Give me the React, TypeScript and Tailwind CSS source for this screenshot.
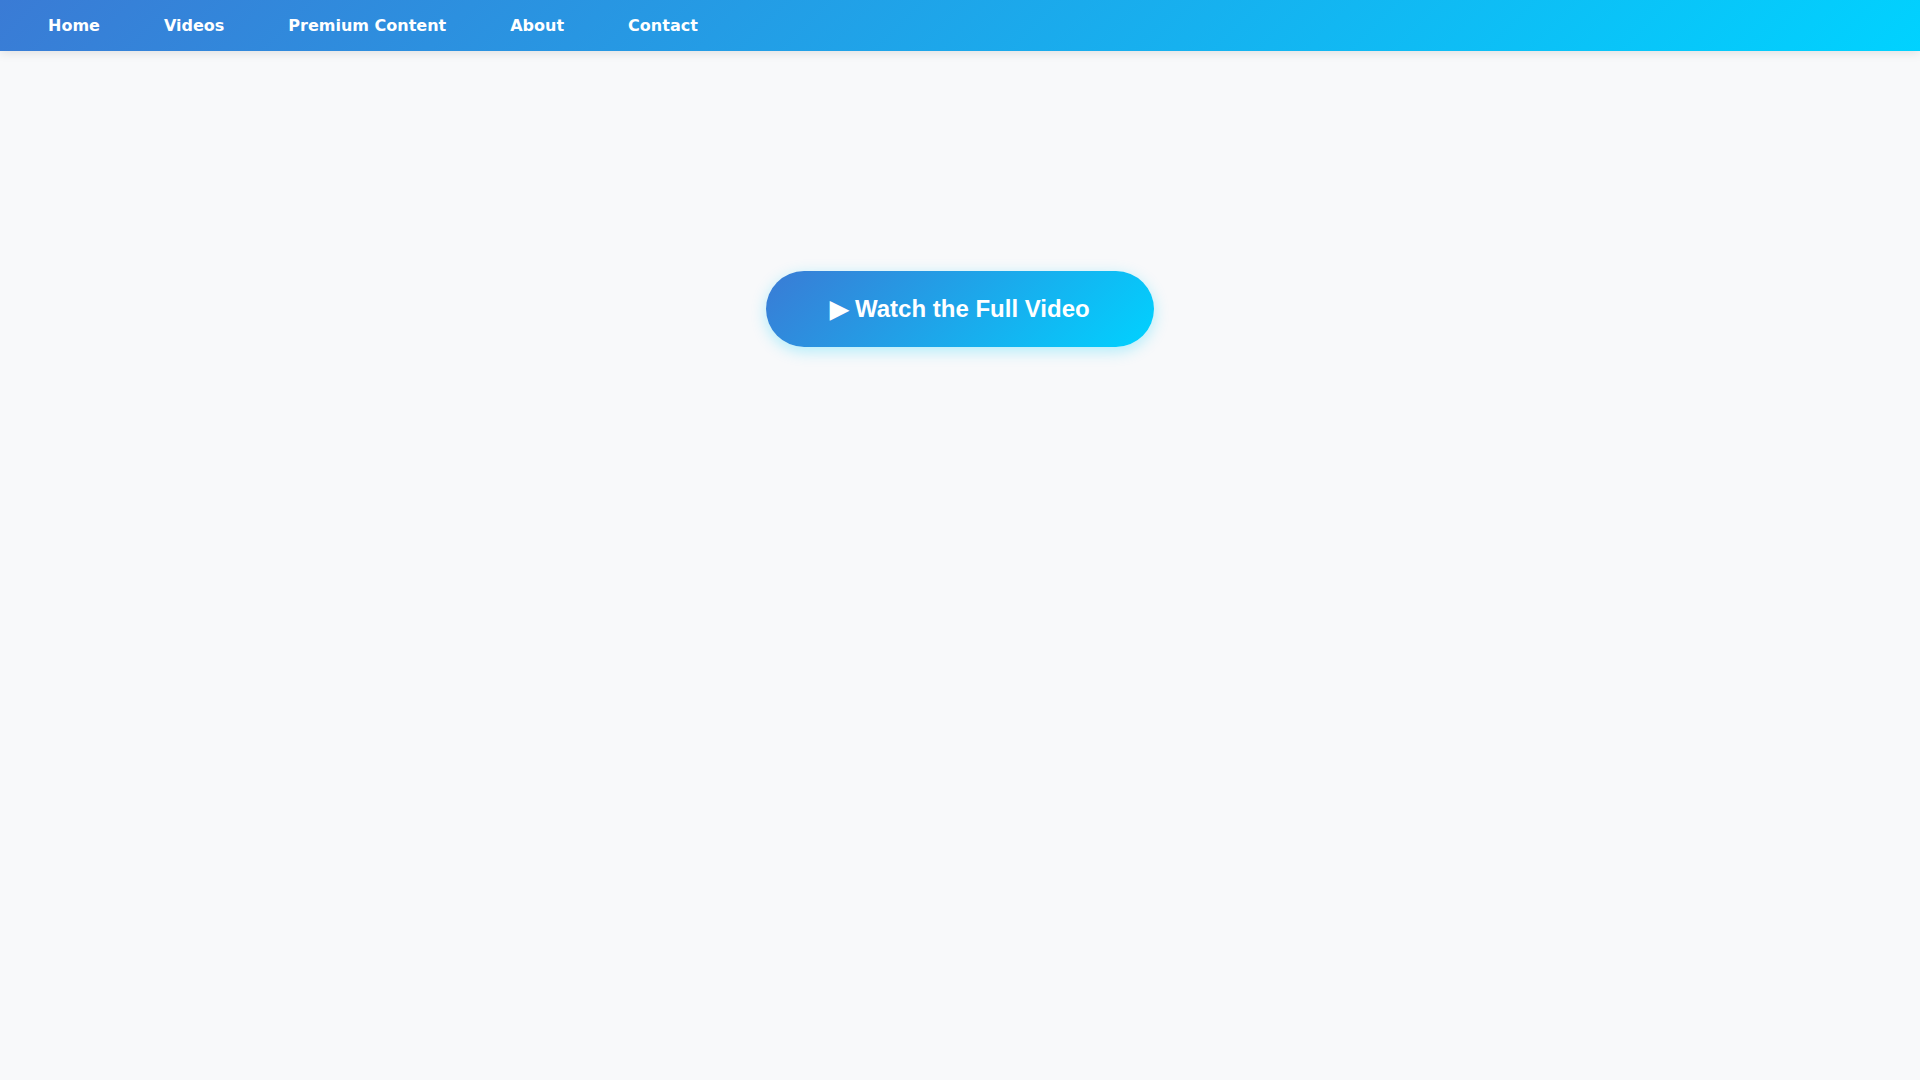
import React from 'react';

const links = ['Home', 'Videos', 'Premium Content', 'About', 'Contact'];

export default function App() {
  return (
    <div className="min-h-screen bg-[#f8f9fa]" style={{ fontFamily: '"DejaVu Sans", sans-serif' }}>
      {/* Top navigation */}
      <nav className="flex px-4 bg-[linear-gradient(135deg,#3a7bd5,#00d2ff)] shadow-[0_2px_10px_rgba(0,0,0,0.1)]">
        {links.map(label => (
          <a key={label} href="#" className="px-8 pt-[17px] pb-[15px] text-base leading-[1.164] font-bold text-white no-underline">
            {label}
          </a>
        ))}
      </nav>

      {/* Call to action */}
      <main className="flex justify-center pt-[220px]">
        <button className="rounded-full px-16 py-6 bg-[linear-gradient(135deg,#3a7bd5,#00d2ff)] text-white text-2xl leading-[1.2] font-bold font-['Liberation_Sans',Arial,sans-serif] shadow-[0_4px_15px_rgba(0,210,255,0.3)] cursor-pointer">
          ▶ Watch the Full Video
        </button>
      </main>
    </div>
  );
}
